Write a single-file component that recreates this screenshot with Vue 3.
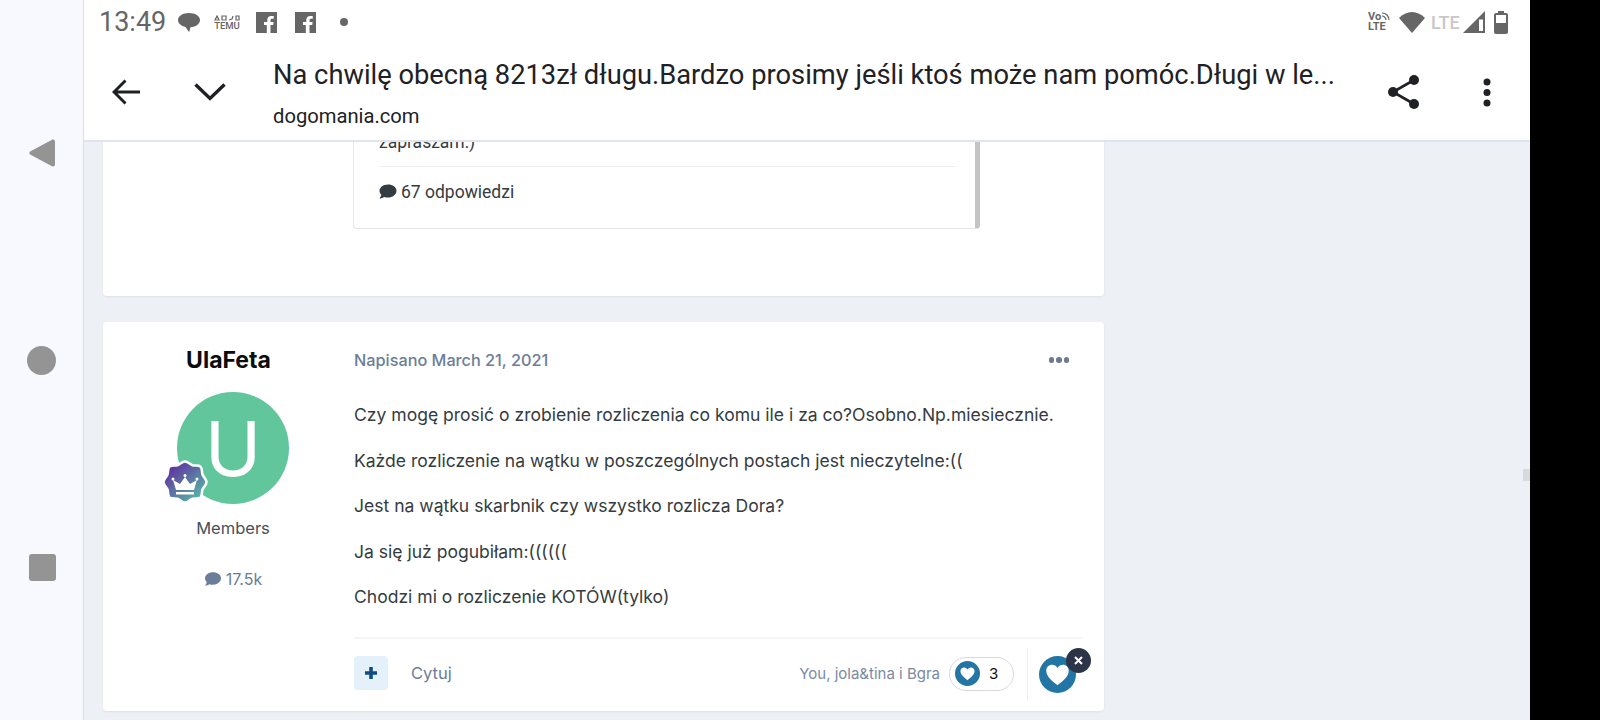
<script setup>
const lines = [
  'Czy mogę prosić o zrobienie rozliczenia co komu ile i za co?Osobno.Np.miesiecznie.',
  'Każde rozliczenie na wątku w poszczególnych postach jest nieczytelne:((',
  'Jest na wątku skarbnik czy wszystko rozlicza Dora?',
  'Ja się już pogubiłam:((((((',
  'Chodzi mi o rozliczenie KOTÓW(tylko)'
]
const bubble = 'M12 2C5.4 2 0 6 0 11c0 2.2 1 4.1 2.7 5.7C2.1 18.6 1 20.6 0 22c2.5 0 5-1 6.6-2.2 1.6.5 3.5.8 5.4.8 6.6 0 12-4.3 12-9.6S18.6 2 12 2z'
const heart = 'M12 21.5C7 17.6 2 13.6 2 8.6 2 5.5 4.4 3.4 7.1 3.4c2 0 3.8 1 4.9 2.9 1.100-1.900 2.900-2.900 4.900-2.900 2.700 0 5.100 2.100 5.100 5.200 0 5-5 9-10 12.900z'
</script>

<template>
  <div class="screen">
    <nav class="sys-nav">
      <svg class="nav-back" width="28" height="30" viewBox="0 0 28 30"><path d="M2.500 15 24 3.500v23z" fill="#949494" stroke="#949494" stroke-width="4" stroke-linejoin="round"/></svg>
      <div class="nav-home"></div>
      <div class="nav-recent"></div>
    </nav>

    <div class="main">
      <header class="top">
        <div class="status">
          <span class="clock">13:49</span>
          <svg class="st-bubble" width="22" height="21" viewBox="0 0 22 21"><path d="M11 1C5 1 0 3.800 0 8c0 3.500 3.300 6.200 7.500 7l3.500 5c.8-1.500 1-3 1.500-4.800C17.800 15 22 12 22 8c0-4.200-5-7-11-7z" fill="#666"/></svg>
          <div class="temu">
            <svg width="26" height="6" viewBox="0 0 26 6"><path d="M1 5l2-4 2 4zM8 1h4v4H8zM15 5l3-1 1-3M22 1h3v4h-3z" fill="none" stroke="#666" stroke-width="1.200"/></svg>
            <span>TEMU</span>
          </div>
          <svg class="st-fb" width="21" height="21" viewBox="0 0 21 21"><path d="M0 0h21v21h-6.500v-8h2.700l.4-3h-3.100V8.200c0-.9.300-1.500 1.500-1.500h1.700V4c-.3 0-1.300-.1-2.400-.1-2.400 0-4 1.400-4 4.100V10H8v3h2.800v8H0z" fill="#666"/></svg>
          <svg class="st-fb2" width="21" height="21" viewBox="0 0 21 21"><path d="M0 0h21v21h-6.500v-8h2.700l.4-3h-3.100V8.200c0-.9.300-1.500 1.500-1.500h1.700V4c-.3 0-1.300-.1-2.400-.1-2.400 0-4 1.400-4 4.100V10H8v3h2.800v8H0z" fill="#666"/></svg>
          <span class="st-dot"></span>
          <div class="status-right">
            <div class="volte">
              <span>Vo</span>
              <svg width="9" height="9" viewBox="0 0 9 9"><path d="M1 1c4 0 7 3 7 7M1 4c2 0 4 2 4 4" fill="none" stroke="#666" stroke-width="1.200"/></svg>
              <span class="lte-small">LTE</span>
            </div>
            <svg class="st-wifi" width="26" height="21" viewBox="0 0 26 21"><path d="M0 6C3.500 2.500 8 0 13 0s9.500 2.500 13 6L13 21z" fill="#666"/></svg>
            <span class="lte">LTE</span>
            <svg class="st-signal" width="22" height="22" viewBox="0 0 22 22"><path d="M0 22 22 0v22z" fill="#666"/><path d="M16 8.500h4V20h-4z" fill="#fff"/></svg>
            <svg class="st-batt" width="14" height="23" viewBox="0 0 14 23"><path d="M4 0h6v2h2a2 2 0 0 1 2 2v17a2 2 0 0 1-2 2H2a2 2 0 0 1-2-2V4a2 2 0 0 1 2-2h2z" fill="#666"/><path d="M2 4h10v8H2z" fill="#fff"/></svg>
          </div>
        </div>
        <div class="toolbar">
          <svg class="tb-back" width="28" height="26" viewBox="0 0 28 26"><path d="M28 13H2.500M13.500 1.500 2 13l11.500 11.500" fill="none" stroke="#202124" stroke-width="3"/></svg>
          <svg class="tb-chev" width="32" height="18" viewBox="0 0 32 18"><path d="M1.500 1.500 16 15.500 30.500 1.500" fill="none" stroke="#202124" stroke-width="3.400"/></svg>
          <div class="tb-title">
            <div class="title">Na chwilę obecną 8213zł długu.Bardzo prosimy jeśli ktoś może nam pomóc.Długi w le...</div>
            <div class="url">dogomania.com</div>
          </div>
          <svg class="tb-share" width="34" height="34" viewBox="0 0 34 34"><path d="M27 5 6 17l21 12" fill="none" stroke="#202124" stroke-width="2.600"/><circle cx="27" cy="5" r="5" fill="#202124"/><circle cx="6" cy="17" r="5" fill="#202124"/><circle cx="27" cy="29" r="5" fill="#202124"/></svg>
          <svg class="tb-more" width="8" height="29" viewBox="0 0 8 29"><circle cx="4" cy="4" r="3.500" fill="#202124"/><circle cx="4" cy="14.500" r="3.500" fill="#202124"/><circle cx="4" cy="25" r="3.500" fill="#202124"/></svg>
        </div>
      </header>

      <div class="page">
        <div class="feed">
          <section class="card first">
            <div class="embed">
              <p class="embed-text">zapraszam:)</p>
              <div class="embed-foot">
                <svg width="18" height="17" viewBox="0 0 24 24"><path :d="bubble" fill="#353c41"/></svg>
                <span>67 odpowiedzi</span>
              </div>
            </div>
          </section>

          <section class="card post">
            <aside class="author">
              <h3>UlaFeta</h3>
              <div class="avatar">
                <span>U</span>
                <svg class="rank" width="50" height="50" viewBox="0 0 50 50">
                  <defs>
                    <linearGradient id="rankFill" x1="0.150" y1="0.100" x2="0.850" y2="0.900">
                      <stop offset="0" stop-color="#5f2ea0"/>
                      <stop offset="1" stop-color="#58b7a5"/>
                    </linearGradient>
                  </defs>
                  <path d="M25 2.500c3 0 5 3 7.500 3.800 3 .7 6-.5 8 1.400 2 2 1 5 2 7.800.8 2.500 4 4.500 4 7.500s-3 5-4 7.500c-1 2.700 0 5.800-2 7.800-2 1.900-5 .7-8 1.400-2.500.8-4.500 3.800-7.500 3.800s-5-3-7.500-3.800c-3-.7-6 .5-8-1.400-2-2-1-5-2-7.800-1-2.500-4-4.500-4-7.500s3.200-5 4-7.500c1-2.800 0-5.800 2-7.800 2-1.900 5-.7 8-1.400 2.500-.8 4.500-3.800 7.500-3.800z" fill="url(#rankFill)" stroke="#fff" stroke-width="2.500"/>
                  <path d="M13 21l7 4 5-7 5 7 7-4-3 10H16z" fill="#fff"/>
                  <circle cx="13" cy="20" r="1.500" fill="#fff"/>
                  <circle cx="25" cy="16.500" r="1.500" fill="#fff"/>
                  <circle cx="37" cy="20" r="1.500" fill="#fff"/>
                  <path d="M16 33h18v2.500H16z" fill="#fff"/>
                </svg>
              </div>
              <div class="group">Members</div>
              <div class="posts">
                <svg width="18" height="16" viewBox="0 0 24 24"><path :d="bubble" fill="#6b7d98"/></svg>
                <span>17.5k</span>
              </div>
            </aside>

            <div class="body">
              <div class="meta">
                <span class="date">Napisano March 21, 2021</span>
                <span class="dots"><i></i><i></i><i></i></span>
              </div>
              <div class="content">
                <p v-for="line in lines" :key="line">{{ line }}</p>
              </div>
              <div class="controls">
                <button class="plus"><svg width="14" height="14" viewBox="0 0 14 14"><path d="M7 1v12M1 7h12" stroke="#0f4c81" stroke-width="3.600"/></svg></button>
                <span class="quote">Cytuj</span>
                <span class="likers">You, jola&amp;tina i Bgra</span>
                <div class="pill">
                  <span class="pill-heart"><svg width="17" height="17" viewBox="0 0 24 24"><path :d="heart" fill="#fff"/></svg></span>
                  <span class="pill-count">3</span>
                </div>
                <div class="like-wrap">
                  <span class="big-heart"><svg width="27" height="27" viewBox="0 0 24 24"><path :d="heart" fill="#fff"/></svg></span>
                  <span class="undo"><svg width="9" height="9" viewBox="0 0 9 9"><path d="M1 1l7 7M8 1 1 8" stroke="#fff" stroke-width="2"/></svg></span>
                </div>
              </div>
            </div>
          </section>
        </div>
        <div class="handle"></div>
      </div>
    </div>

    <div class="black"></div>
  </div>
</template>

<style scoped>
.screen {
  display: flex;
  width: 1600px;
  height: 720px;
  overflow: hidden;
  font-family: Inter, "Liberation Sans", sans-serif;
}

.sys-nav {
  width: 54px;
  flex: none;
  background: #f8f9fe;
  border-right: 1px solid #dcdee3;
  display: flex;
  flex-direction: column;
  padding: 138px 0 0 29px;
  box-sizing: content-box;
}

.nav-back { display: block; }

.nav-home {
  width: 29px;
  height: 29px;
  border-radius: 50%;
  background: #949494;
  margin: 178px 0 0 -2px;
}

.nav-recent {
  width: 27px;
  height: 27px;
  border-radius: 3px;
  background: #949494;
  margin-top: 179px;
}

.main {
  width: 1446px;
  flex: none;
  display: flex;
  flex-direction: column;
  background: #edf0f5;
}

.top {
  height: 140px;
  flex: none;
  background: #fff;
  border-bottom: 2px solid #dfe4ee;
}

.status {
  height: 44px;
  display: flex;
  align-items: center;
  padding-left: 15px;
  color: #666;
}

.clock {
  font-family: Roboto, sans-serif;
  font-size: 27px;
  width: 66px;
}

.st-bubble { margin-left: 13px; }

.temu {
  margin-left: 14px;
  width: 26px;
  display: flex;
  flex-direction: column;
  align-items: center;
  font-family: Roboto, sans-serif;
  font-size: 9.5px;
  font-weight: 500;
  line-height: 9px;
}

.st-fb { margin-left: 16px; }
.st-fb2 { margin-left: 18px; }

.st-dot {
  width: 8px;
  height: 8px;
  border-radius: 50%;
  background: #666;
  margin-left: 24px;
}

.status-right {
  margin-left: auto;
  display: flex;
  align-items: center;
  padding-right: 22px;
}

.volte {
  width: 24px;
  display: flex;
  flex-wrap: wrap;
  font-family: Roboto, sans-serif;
  font-size: 11px;
  font-weight: 700;
  line-height: 10px;
}

.lte-small { width: 24px; }

.st-wifi { margin-left: 7px; }

.lte {
  margin-left: 6px;
  font-family: Roboto, sans-serif;
  font-size: 18px;
  font-weight: 500;
  color: #c8c8c8;
  width: 32px;
}

.st-signal { margin-left: 0; }
.st-batt { margin-left: 9px; }

.toolbar {
  height: 96px;
  display: flex;
  align-items: center;
  position: relative;
}

.tb-back { margin: 0 0 0 28px; }
.tb-chev { margin-left: 54px; }

.tb-title {
  margin-left: 47px;
  width: 1063px;
  color: #202124;
  font-family: Roboto, sans-serif;
  margin-top: 3px;
}

.title {
  font-size: 27.3px;
  line-height: 36px;
  white-space: nowrap;
}

.url {
  font-size: 20.2px;
  line-height: 28px;
  margin-top: 9px;
}

.tb-share { margin-left: 51px; }
.tb-more { margin-left: 62px; }

.page {
  flex: 1;
  position: relative;
  overflow: hidden;
}

.feed {
  margin-top: -20px;
  margin-left: 19px;
  width: 1001px;
}

.card {
  background: #fff;
  border-radius: 4px;
  box-shadow: 0 1px 2px rgba(40, 60, 90, 0.08);
}

.first {
  height: 174px;
  padding-left: 250px;
  box-sizing: border-box;
  margin-bottom: 26px;
}

.embed {
  width: 627px;
  height: 107px;
  box-sizing: border-box;
  border: 1px solid #e6e6e6;
  border-right: 5px solid #c4c4c4;
  border-radius: 4px;
  padding: 0 20px 0 25px;
  font-family: Roboto, sans-serif;
  font-size: 17.5px;
  color: #353c41;
}

.embed-text {
  margin: 0;
  height: 44px;
  line-height: 22px;
  padding-top: 8px;
  box-sizing: border-box;
  border-bottom: 1px solid #eeeeee;
}

.embed-foot {
  display: flex;
  align-items: center;
  gap: 4px;
  height: 49px;
}

.post {
  height: 389px;
  display: flex;
}

.author {
  width: 251px;
  flex: none;
  padding: 23px 0 0 9px;
  box-sizing: border-box;
  text-align: center;
}

.author h3 {
  margin: 0 0 0 -9px;
  font-size: 23px;
  line-height: 30px;
  font-weight: 700;
  color: #0c0c0c;
}

.avatar {
  position: relative;
  width: 112px;
  height: 112px;
  margin: 17px auto 0;
  border-radius: 50%;
  background: #62c69c;
  color: #fff;
  font-size: 76px;
  line-height: 112px;
}

.rank {
  position: absolute;
  left: -17px;
  top: 67px;
}

.group {
  margin-top: 13px;
  font-size: 16.5px;
  line-height: 22px;
  color: #4a5058;
}

.posts {
  margin-top: 29px;
  display: flex;
  justify-content: center;
  align-items: center;
  gap: 4px;
  font-size: 16px;
  line-height: 22px;
  color: #6b7d98;
}

.body {
  width: 729px;
  flex: none;
}

.meta {
  display: flex;
  justify-content: space-between;
  align-items: center;
  height: 30px;
  margin-top: 23px;
}

.date {
  font-size: 16.25px;
  font-weight: 500;
  color: #6b7d98;
}

.dots {
  display: flex;
  gap: 2px;
  margin-right: 14px;
}

.dots i {
  width: 5.500px;
  height: 5.500px;
  border-radius: 50%;
  background: #6b7a90;
}

.content {
  margin-top: 27px;
  height: 235px;
  border-bottom: 2px solid #f5f5f5;
  font-size: 17.55px;
  line-height: 26px;
  color: #353c41;
}

.content p { margin: 0 0 19.500px; }

.controls {
  display: flex;
  align-items: center;
  height: 68px;
}

.plus {
  width: 34px;
  height: 34px;
  padding: 0;
  border: none;
  border-radius: 4px;
  background: #e4f0fa;
  display: flex;
  align-items: center;
  justify-content: center;
}

.quote {
  margin-left: 23px;
  font-size: 16.500px;
  color: #6b7d98;
}

.likers {
  margin-left: auto;
  font-size: 15px;
  color: #7a8aa3;
}

.pill {
  margin: 1px 0 0 9px;
  width: 65px;
  height: 34px;
  box-sizing: border-box;
  border: 1px solid #d6d9e2;
  border-radius: 17px;
  display: flex;
  align-items: center;
  padding-left: 5px;
}

.pill-heart {
  width: 25px;
  height: 25px;
  border-radius: 50%;
  background: #2375a6;
  display: flex;
  align-items: center;
  justify-content: center;
}

.pill-count {
  margin-left: 9px;
  font-size: 15px;
  color: #111;
}

.like-wrap {
  position: relative;
  margin: 2px 0 0 13px;
  width: 56px;
  height: 52px;
  border-left: 1px solid #eeeeee;
  display: flex;
  align-items: center;
  padding-left: 11px;
  box-sizing: border-box;
}

.big-heart {
  width: 37px;
  height: 37px;
  border-radius: 50%;
  background: #2375a6;
  display: flex;
  align-items: center;
  justify-content: center;
}

.undo {
  position: absolute;
  left: 38px;
  top: 0;
  width: 25px;
  height: 25px;
  border-radius: 50%;
  background: #2c3447;
  display: flex;
  align-items: center;
  justify-content: center;
}

.handle {
  position: absolute;
  right: 0;
  top: 327px;
  width: 7px;
  height: 12px;
  background: #d8dadd;
}

.black {
  flex: 1;
  background: #000;
}
</style>
